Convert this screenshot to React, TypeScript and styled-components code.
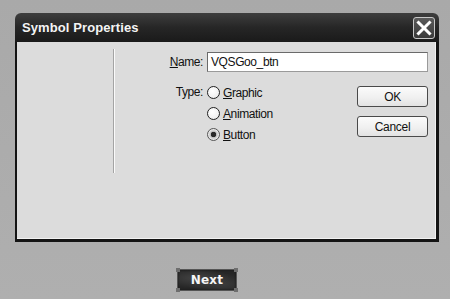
import React from "react";
import styled, { createGlobalStyle } from "styled-components";

const Global = createGlobalStyle`
  html, body { margin: 0; padding: 0; }
  body {
    background: #acacac;
    font-family: "Liberation Sans", Arial, sans-serif;
    width: 450px;
    height: 299px;
    overflow: hidden;
  }
`;

const Page = styled.div`
  width: 450px;
  height: 299px;
  background: linear-gradient(180deg, #a9a9a9 0%, #afafaf 100%);
  display: flex;
  flex-direction: column;
  padding: 13px 0 0 15px;
  box-sizing: border-box;
`;

const Dialog = styled.div`
  width: 424px;
  height: 229px;
  display: flex;
  flex-direction: column;
  box-sizing: border-box;
`;

const TitleBar = styled.div`
  height: 29px;
  flex: none;
  display: flex;
  align-items: center;
  justify-content: space-between;
  padding: 0 4px 0 7px;
  border-radius: 6px 6px 0 0;
  background: linear-gradient(180deg, #3e3e3e 0%, #262626 50%, #1a1a1a 100%);
  box-sizing: border-box;
`;

const Title = styled.span`
  color: #f4f4f4;
  font-family: "Liberation Sans", Arial, sans-serif;
  font-weight: bold;
  font-size: 13px;
  letter-spacing: 0.1px;
`;

const CloseButton = styled.div`
  width: 22px;
  height: 22px;
  box-sizing: border-box;
  border: 1px solid #c8c8c8;
  border-radius: 3px;
  background: linear-gradient(180deg, #5a5a5a 0%, #3a3a3a 100%);
  display: flex;
  align-items: center;
  justify-content: center;
`;

const Body = styled.div`
  flex: 1;
  display: flex;
  background: #dcdcdc;
  border-left: 2px solid #141414;
  border-right: 3px solid #141414;
  border-bottom: 3px solid #141414;
  box-shadow: inset -1px -1px 0 #f2f2f2;
  box-sizing: border-box;
`;

const LeftPanel = styled.div`
  width: 96px;
  flex: none;
`;

const Separator = styled.div`
  width: 0;
  height: 124px;
  margin-top: 7px;
  border-left: 1px solid #a4a4a4;
  border-right: 1px solid #fafafa;
  flex: none;
`;

const Form = styled.div`
  flex: 1;
  display: flex;
  flex-direction: column;
  padding: 10px 8px 0 0;
`;

const Row = styled.div`
  display: flex;
  align-items: flex-start;
`;

const Label = styled.div`
  width: 88px;
  margin-right: 4px;
  text-align: right;
  font-size: 12px;
  letter-spacing: -0.4px;
  color: #111;
  line-height: ${(p: { $lh: number }) => p.$lh}px;
  flex: none;
`;

const TextInput = styled.div`
  flex: 1;
  height: 20px;
  box-sizing: border-box;
  background: #ffffff;
  border: 1px solid #6a6a6a;
  border-bottom-color: #9a9a9a;
  border-right-color: #9a9a9a;
  padding-left: 3px;
  font-size: 12px;
  letter-spacing: -0.4px;
  line-height: 18px;
  color: #111;
`;

const TypeSection = styled(Row)`
  margin-top: 10px;
`;

const RadioGroup = styled.div`
  display: flex;
  flex-direction: column;
  flex: 1;
`;

const RadioRow = styled.div`
  height: 21px;
  display: flex;
  align-items: center;
  gap: 3px;
  font-size: 12px;
  letter-spacing: -0.4px;
  color: #111;
`;

const RadioCircle = styled.span<{ $checked?: boolean }>`
  width: 13px;
  height: 13px;
  box-sizing: border-box;
  border-radius: 50%;
  border: 1px solid ${(p) => (p.$checked ? "#555" : "#222")};
  background: ${(p) =>
    p.$checked
      ? "radial-gradient(circle at 50% 50%, #2a2a2a 0 2.5px, #bdbdbd 3px, #e8e8e8 5px)"
      : "radial-gradient(circle at 40% 35%, #ffffff 0, #f2f2f2 60%, #dedede 100%)"};
  flex: none;
`;

const U = styled.span`
  text-decoration: underline;
  text-underline-offset: 1px;
`;

const ButtonColumn = styled.div`
  width: 71px;
  display: flex;
  flex-direction: column;
  gap: 9px;
  padding-top: 4px;
  flex: none;
`;

const PushButton = styled.div<{ $h: number }>`
  height: ${(p) => p.$h}px;
  box-sizing: border-box;
  border: 1px solid #4a4a4a;
  border-radius: 3px;
  background: linear-gradient(180deg, #fbfbfb 0%, #f0f0f0 55%, #e2e2e2 100%);
  display: flex;
  align-items: center;
  justify-content: center;
  font-size: 12px;
  letter-spacing: -0.3px;
  color: #111;
`;

const Stage = styled.div`
  padding: 27px 0 0 162px;
  display: flex;
`;

const NextButton = styled.div`
  position: relative;
  width: 60px;
  height: 22px;
  box-sizing: border-box;
  background:
    radial-gradient(ellipse at 30% 40%, rgba(90,90,90,0.55) 0, rgba(0,0,0,0) 60%),
    radial-gradient(ellipse at 75% 70%, rgba(80,80,80,0.5) 0, rgba(0,0,0,0) 55%),
    #262626;
  border: 1px solid #555;
  box-shadow: inset 0 0 2px #111;
  display: flex;
  align-items: center;
  justify-content: center;
  color: #f6f6f6;
  font-family: "DejaVu Sans", Verdana, sans-serif;
  font-weight: bold;
  font-size: 12px;
  letter-spacing: 0.2px;
`;

const Handle = styled.span<{ $top: boolean; $left: boolean }>`
  position: absolute;
  width: 4px;
  height: 4px;
  background: #6e6e6e;
  ${(p) => (p.$top ? "top: -2px;" : "bottom: -2px;")}
  ${(p) => (p.$left ? "left: -2px;" : "right: -2px;")}
`;

export default function App() {
  return (
    <>
      <Global />
      <Page>
        <Dialog>
          <TitleBar>
            <Title>Symbol Properties</Title>
            <CloseButton>
              <svg width="16" height="16" viewBox="0 0 16 16">
                <path d="M2.5 2.5 L13.5 13.5 M13.5 2.5 L2.5 13.5" stroke="#ffffff" strokeWidth="3" strokeLinecap="square" />
              </svg>
            </CloseButton>
          </TitleBar>
          <Body>
            <LeftPanel />
            <Separator />
            <Form>
              <Row>
                <Label $lh={20}>
                  <U>N</U>ame:
                </Label>
                <TextInput>VQSGoo_btn</TextInput>
              </Row>
              <TypeSection>
                <Label $lh={21}>Type:</Label>
                <RadioGroup>
                  <RadioRow>
                    <RadioCircle />
                    <span>
                      <U>G</U>raphic
                    </span>
                  </RadioRow>
                  <RadioRow>
                    <RadioCircle />
                    <span>
                      <U>A</U>nimation
                    </span>
                  </RadioRow>
                  <RadioRow>
                    <RadioCircle $checked />
                    <span>
                      <U>B</U>utton
                    </span>
                  </RadioRow>
                </RadioGroup>
                <ButtonColumn>
                  <PushButton $h={21}>OK</PushButton>
                  <PushButton $h={21}>Cancel</PushButton>
                </ButtonColumn>
              </TypeSection>
            </Form>
          </Body>
        </Dialog>
        <Stage>
          <NextButton>
            Next
            <Handle $top $left />
            <Handle $top $left={false} />
            <Handle $top={false} $left />
            <Handle $top={false} $left={false} />
          </NextButton>
        </Stage>
      </Page>
    </>
  );
}
